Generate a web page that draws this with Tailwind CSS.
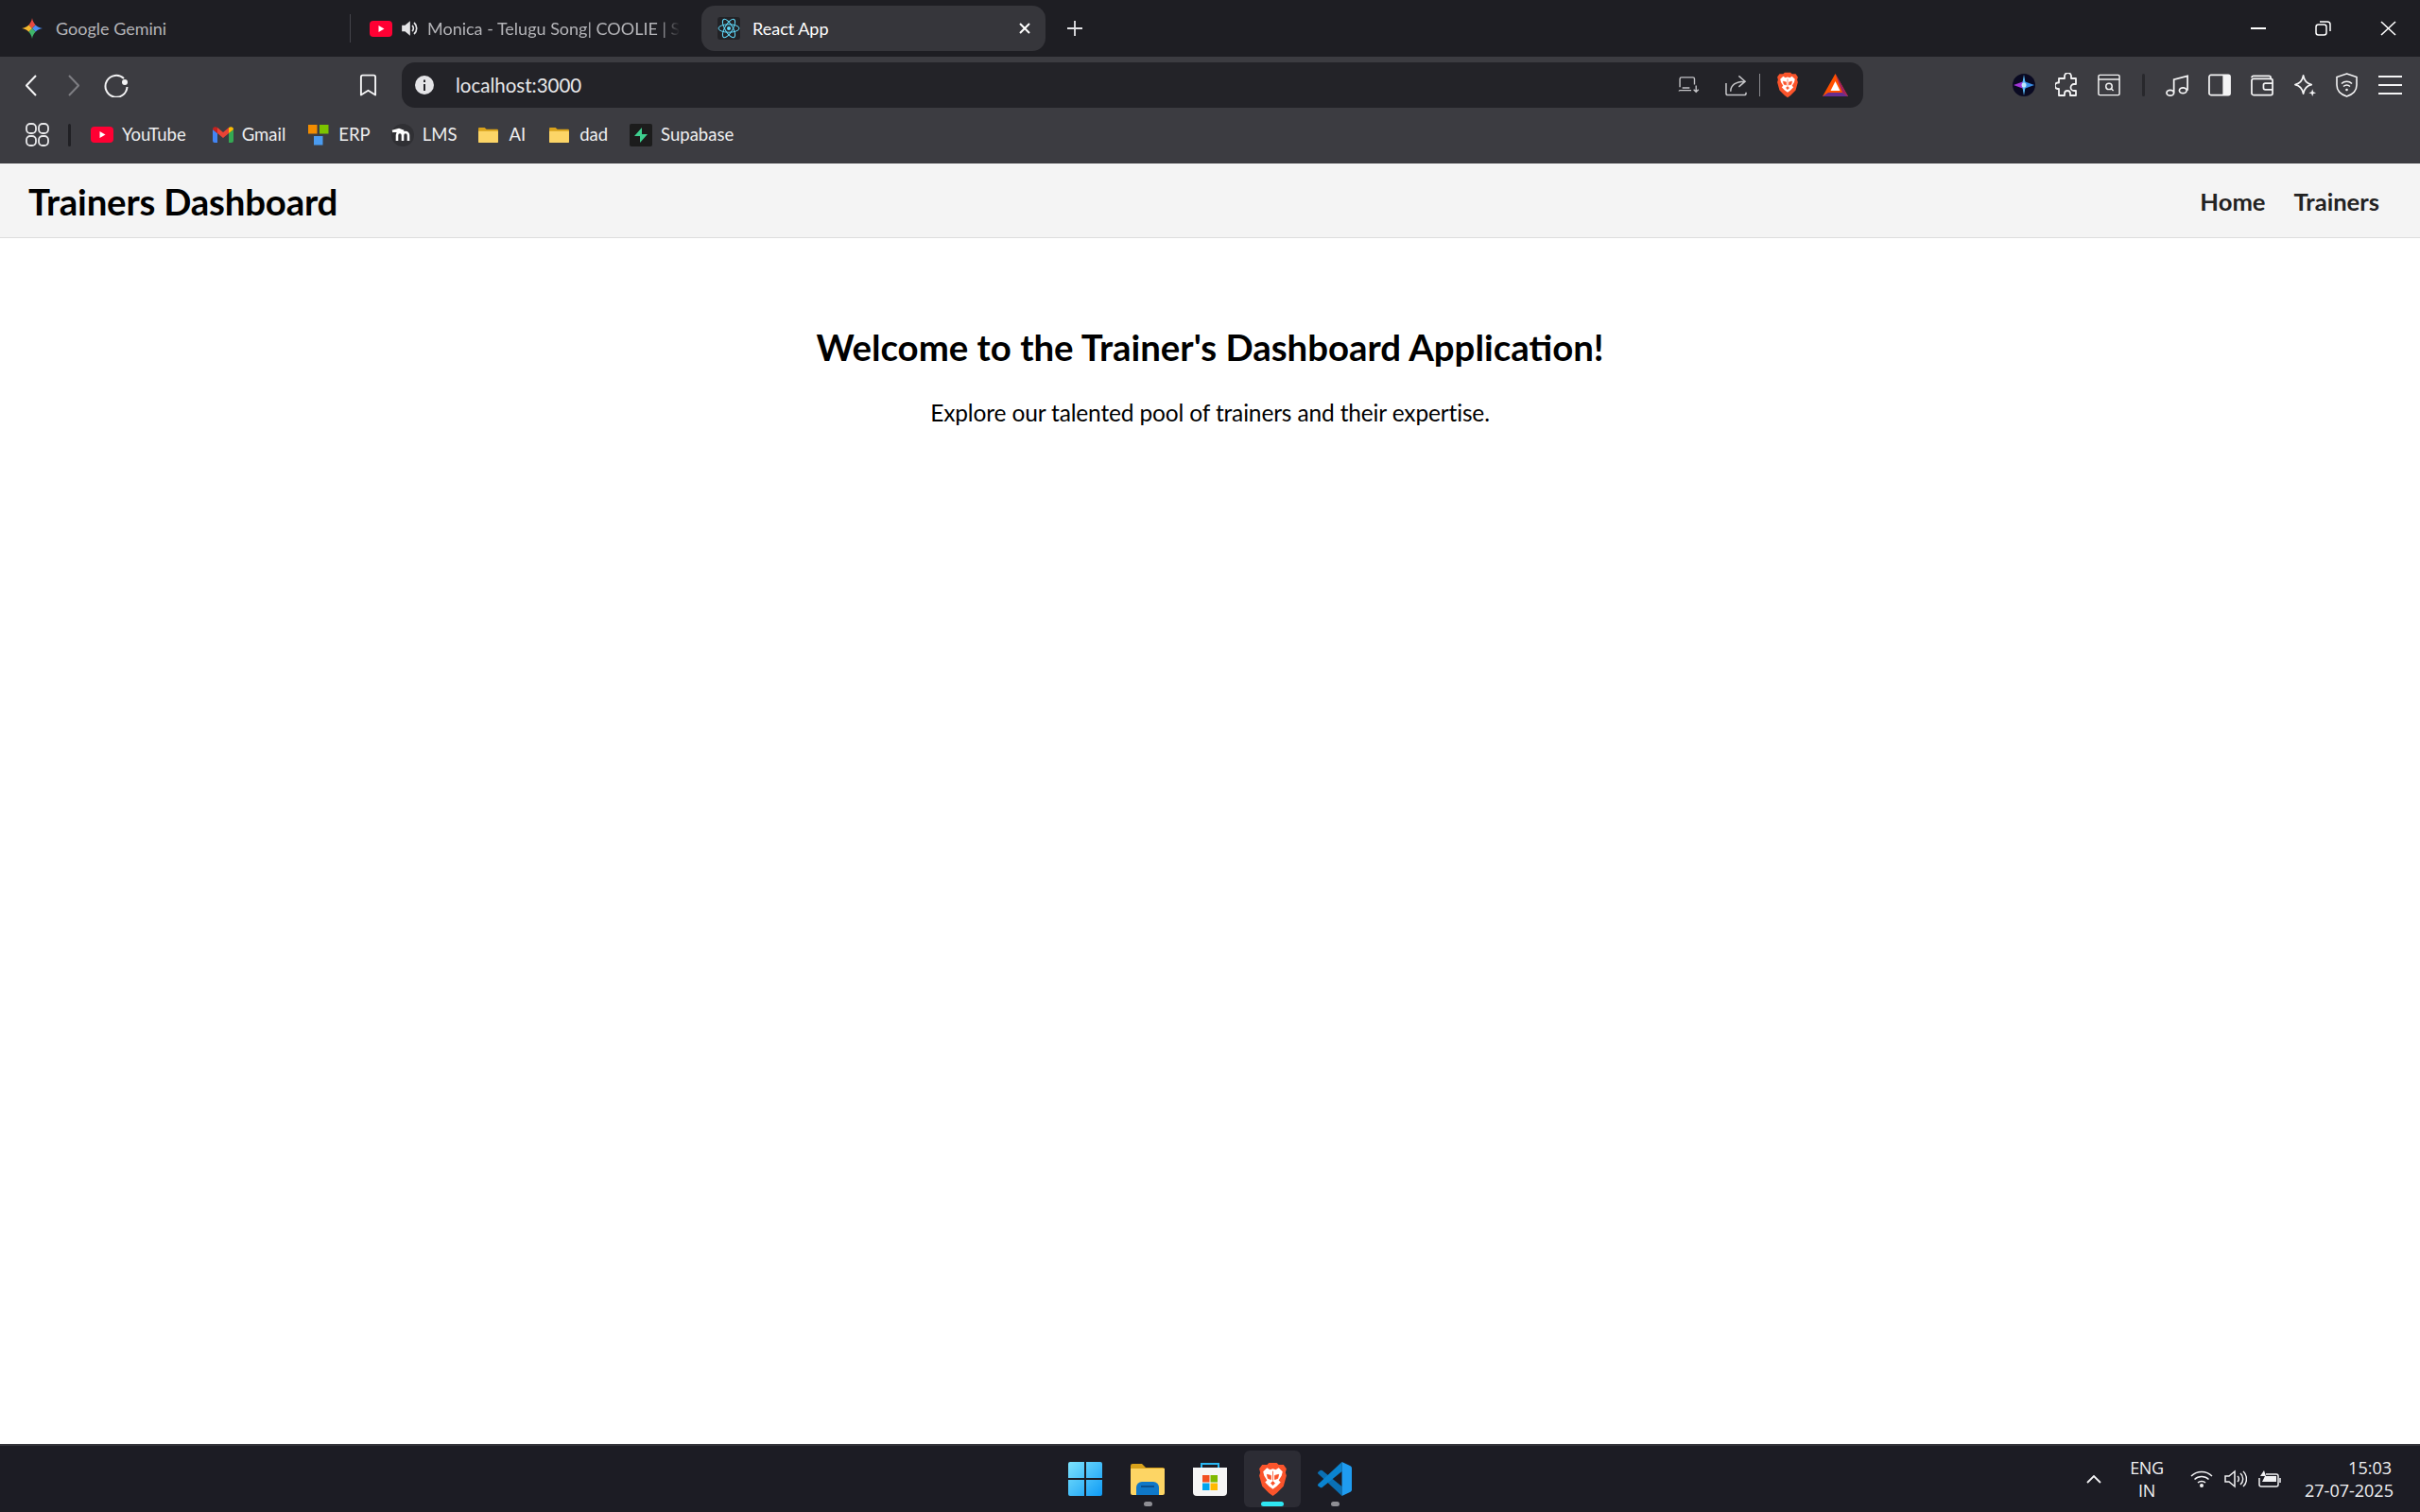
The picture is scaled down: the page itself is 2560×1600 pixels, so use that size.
<!DOCTYPE html>
<html lang="en">
<head>
<meta charset="UTF-8">
<title>React App</title>
<script src="https://cdn.jsdelivr.net/npm/@tailwindcss/browser@4"></script>
</head>
<body class="h-[1600px] w-[2560px] overflow-hidden bg-white font-['Lato',sans-serif] flex flex-col">
<svg class="hidden">
  <defs>
    <symbol id="brave" viewBox="0 0 30 36">
      <path d="M4 3 9 3 11 1 19 1 21 3 26 3 29 7 28 11 29 14 26 25 19 32 15 35 11 32 4 25 1 14 2 11 1 7Z" fill="#fb542b"/>
      <path d="M5 10 9 6 12 8 15 7 18 8 21 6 25 10 24 14 21 19 23 21 19 25 15 28 11 25 7 21 9 19 6 14Z" fill="#fff"/>
      <path d="M9 13 13 14 13 18 10 17ZM21 13 17 14 17 18 20 17ZM15 9.500V19M13 22 15 20 17 22 15 24Z" fill="#fb542b" stroke="#fb542b" stroke-width=".8"/>
    </symbol>
    <symbol id="folder" viewBox="0 0 24 20">
      <path d="M1 3a1 1 0 0 1 1-1h6l2 2h12a1 1 0 0 1 1 1v13a1 1 0 0 1-1 1H2a1 1 0 0 1-1-1Z" fill="#d9a21b"/>
      <path d="M1 6h22v12a1 1 0 0 1-1 1H2a1 1 0 0 1-1-1Z" fill="#fcd567"/>
    </symbol>
  </defs>
</svg>

<!-- tab strip -->
<div class="h-[60px] shrink-0 bg-[#1e1e23] flex items-center text-[18px]">
  <div class="w-[371px] h-[48px] flex items-center pl-[22px] gap-[13px] text-[#b4b4b8] border-r border-[#44444a] [border-image:linear-gradient(transparent_20%,#44444a_20%,#44444a_80%,transparent_80%)_1]">
    <svg class="w-[24px] h-[24px]" viewBox="0 0 24 24">
      <defs><clipPath id="star"><path d="M12 1C13 7 17 11 23 12 17 13 13 17 12 23 11 17 7 13 1 12 7 11 11 7 12 1Z"/></clipPath></defs>
      <g clip-path="url(#star)">
        <path d="M0 0h24L12 12Z" fill="#e8493f"/>
        <path d="M24 0v24L12 12Z" fill="#4d8df0"/>
        <path d="M0 24h24L12 12Z" fill="#3fb56a"/>
        <path d="M0 0v24l12-12Z" fill="#f5b82e"/>
      </g>
    </svg>
    <span>Google Gemini</span>
  </div>
  <div class="w-[371px] h-[48px] flex items-center pl-[20px] text-[#b4b4b8]">
    <svg class="w-[24px] h-[17px] mr-[10px] shrink-0" viewBox="0 0 24 17"><rect width="24" height="17" rx="4" fill="#ff0033"/><path d="M9.500 5v7l6-3.500Z" fill="#fff"/></svg>
    <svg class="w-[18px] h-[18px] mr-[9px] shrink-0" viewBox="0 0 18 18" fill="none" stroke="#e4e4e7" stroke-width="1.700"><path d="M1 6.500h3L8 3v12l-4-3.500H1Z" fill="#e4e4e7"/><path d="M11 6a4 4 0 0 1 0 6M13 3a8 8 0 0 1 0 12"/></svg>
    <span class="whitespace-nowrap [mask-image:linear-gradient(90deg,#000_92%,transparent)]">Monica - Telugu Song| COOLIE | S</span>
  </div>
  <div class="w-[364px] h-[48px] rounded-[14px] bg-[#36363b] flex items-center pl-[17px] pr-[15px] text-white">
    <svg class="w-[24px] h-[24px] mr-[13px] bg-[#222226] rounded-[3px] shrink-0" viewBox="0 0 24 24" fill="none" stroke="#61dafb" stroke-width="1"><circle cx="12" cy="12" r="2" fill="#61dafb" stroke="none"/><ellipse cx="12" cy="12" rx="11" ry="4.200"/><ellipse cx="12" cy="12" rx="11" ry="4.200" transform="rotate(60 12 12)"/><ellipse cx="12" cy="12" rx="11" ry="4.200" transform="rotate(120 12 12)"/></svg>
    <span class="flex-1">React App</span>
    <svg class="w-[14px] h-[14px]" viewBox="0 0 14 14" stroke="#fff" stroke-width="2"><path d="M2 2l10 10M12 2 2 12"/></svg>
  </div>
  <svg class="w-[16px] h-[16px] ml-[23px]" viewBox="0 0 16 16" stroke="#e4e4e7" stroke-width="1.800"><path d="M8 0v16M0 8h16"/></svg>
  <div class="ml-auto flex items-center h-full">
    <svg class="w-[16px] h-[16px] mr-[52px]" viewBox="0 0 16 16" stroke="#fff" stroke-width="2"><path d="M0 8h16"/></svg>
    <svg class="w-[17px] h-[16px] mr-[52px]" viewBox="0 0 17 16" fill="none" stroke="#fff" stroke-width="1.500"><rect x="1" y="4" width="11" height="11" rx="2.500"/><path d="M5 1h8a3 3 0 0 1 3 3v7"/></svg>
    <svg class="w-[17px] h-[16px] mr-[25px]" viewBox="0 0 17 16" stroke="#fff" stroke-width="1.600"><path d="M1 1l15 14M16 1 1 15"/></svg>
  </div>
</div>

<!-- toolbar -->
<div class="h-[60px] shrink-0 bg-[#3c3c41] flex items-center">
  <div class="w-[425px] h-full flex items-center pl-[27px]">
    <svg class="w-[12px] h-[23px] mr-[33px]" viewBox="0 0 12 23" fill="none" stroke="#f4f4f5" stroke-width="2"><path d="M11 1 1 11.500 11 22"/></svg>
    <svg class="w-[12px] h-[23px] mr-[26px]" viewBox="0 0 12 23" fill="none" stroke="#7d7d82" stroke-width="2"><path d="M1 1l10 10.500L1 22"/></svg>
    <svg class="w-[26px] h-[26px]" viewBox="0 0 26 26" fill="none" stroke="#f4f4f5" stroke-width="2"><path d="M21 6A11.500 11.500 0 1 0 24.500 15"/><circle cx="22" cy="10" r="3" fill="#f4f4f5" stroke="none"/></svg>
    <svg class="w-[19px] h-[25px] ml-auto mr-[26px]" viewBox="0 0 20 25" fill="none" stroke="#f4f4f5" stroke-width="2"><path d="M2 3a2 2 0 0 1 2-2h12a2 2 0 0 1 2 2v20l-8-5-8 5Z" stroke-linejoin="round"/></svg>
  </div>
  <div class="w-[1546px] h-[48px] rounded-[14px] bg-[#232328] flex items-center pl-[14px] pr-[16px]">
    <svg class="w-[20px] h-[20px] mr-[23px]" viewBox="0 0 20 20"><circle cx="10" cy="10" r="10" fill="#e4e4e7"/><rect x="9" y="9" width="2" height="7" fill="#232328"/><rect x="9" y="4.500" width="2" height="2.500" fill="#232328"/></svg>
    <span class="text-[#e8e8ea] text-[20.500px]">localhost:3000</span>
    <div class="ml-auto flex items-center">
      <svg class="w-[25px] h-[18px] mr-[26px]" viewBox="0 0 26 21" fill="none" stroke="#c4c4c7" stroke-width="1.600"><path d="M20 10V3a2 2 0 0 0-2-2H4a2 2 0 0 0-2 2v10"/><path d="M1 18a1 1 0 0 1 1-1h14M5 14h9M22 11v8M19 16l3 3 3-3"/></svg>
      <svg class="w-[23px] h-[23px] mr-[13px]" viewBox="0 0 24 23" fill="none" stroke="#c4c4c7" stroke-width="1.600"><path d="M1 9v11a2 2 0 0 0 2 2h18a2 2 0 0 0 2-2v-1"/><path d="M6 18c0-7 6-11 15-11M15 1l7 6-7 6"/></svg>
      <div class="w-px h-[24px] bg-[#8a8a8e] mr-[17px]"></div>
      <svg class="w-[24px] h-[28px] mr-[25px]"><use href="#brave"/></svg>
      <svg class="w-[27px] h-[24px]" viewBox="0 0 27 24"><path d="M13.500 0 27 24H0Z" fill="#ff5000"/><path d="M13.500 0 27 24l-6-4Z" fill="#9e1f63"/><path d="M0 24h27l-6-4H6Z" fill="#662d91"/><path d="M13.500 8l5 10h-10Z" fill="#fff"/></svg>
    </div>
  </div>
  <div class="flex-1 h-full flex items-center pl-[158px]">
    <svg class="w-[24px] h-[24px] mr-[21px]" viewBox="0 0 24 24"><circle cx="12" cy="12" r="12" fill="#0a0a22"/><path d="M12 8 1 12l11 4Z" fill="#a235d8"/><path d="M12 8l11 4-11 4Z" fill="#3a8fe8"/><path d="M12 1l2 11-2 11-2-11Z" fill="#58b8f5"/><circle cx="12" cy="12" r="2.500" fill="#bfe6fc"/></svg>
    <svg class="w-[26px] h-[26px] mr-[19px]" viewBox="0 0 26 26" fill="none" stroke="#f4f4f5" stroke-width="1.800" stroke-linejoin="round"><path d="M10 3.500a3.500 3.500 0 0 1 7 0V6h5v6h-2a3.500 3.500 0 0 0 0 7h2v5h-6v-2a3 3 0 0 0-6 0v2H4v-7H2.500a3.300 3.300 0 0 1 0-6.500H4V6h6Z"/></svg>
    <svg class="w-[24px] h-[24px] mr-[23px]" viewBox="0 0 26 25" fill="none" stroke="#f4f4f5" stroke-width="1.600"><rect x="1" y="1" width="24" height="23" rx="1.500"/><path d="M1 6h24"/><circle cx="13" cy="14" r="3.500"/><path d="M15.500 16.500 18 19"/></svg>
    <div class="w-[3px] h-[24px] rounded bg-[#28282c] mr-[22px]"></div>
    <svg class="w-[25px] h-[25px] mr-[20px]" viewBox="0 0 26 25" fill="none" stroke="#f4f4f5" stroke-width="1.800"><ellipse cx="5" cy="20.500" rx="4" ry="3"/><ellipse cx="19" cy="18" rx="4" ry="3"/><path d="M9 20V6L24 2v16"/></svg>
    <svg class="w-[24px] h-[24px] mr-[21px]" viewBox="0 0 25 24"><rect x="1" y="1" width="23" height="22" rx="2" fill="none" stroke="#f4f4f5" stroke-width="1.800"/><rect x="16" y="1" width="8" height="22" fill="#f4f4f5"/></svg>
    <svg class="w-[24px] h-[24px] mr-[21px]" viewBox="0 0 25 24" fill="none" stroke="#f4f4f5" stroke-width="1.800"><path d="M1 4a2 2 0 0 1 2-2h17a2 2 0 0 1 2 2v2"/><rect x="1" y="5" width="23" height="18" rx="2"/><path d="M24 10h-8a2 2 0 0 0-2 2v3a2 2 0 0 0 2 2h8"/></svg>
    <svg class="w-[25px] h-[25px] mr-[20px]" viewBox="0 0 26 26" fill="none" stroke="#f4f4f5" stroke-width="1.800"><path d="M11 2c1 6 4 9 9 10-5 1-8 4-9 10-1-6-4-9-9-10 5-1 8-4 9-10Z" stroke-linejoin="round"/><path d="M21 17l1 3 3 1-3 1-1 3-1-3-3-1 3-1Z" fill="#f4f4f5" stroke="none"/></svg>
    <svg class="w-[23px] h-[26px] mr-[22px]" viewBox="0 0 23 26" fill="none" stroke="#f4f4f5" stroke-width="1.600"><path d="M11.500 1 22 4.500V13c0 6-4.500 10-10.500 12C5.500 23 1 19 1 13V4.500Z"/><path d="M6 11.500c3-3 8-3 11 0M8 14.500c2-1.700 5-1.700 7 0"/><circle cx="11.500" cy="18" r="1.300" fill="#f4f4f5" stroke="none"/></svg>
    <svg class="w-[25px] h-[20px]" viewBox="0 0 25 20" stroke="#f4f4f5" stroke-width="2"><path d="M0 1h25M0 10h25M0 19h25"/></svg>
  </div>
</div>

<!-- bookmarks -->
<div class="h-[53px] shrink-0 bg-[#3c3c41] flex items-center pl-[27px] pb-[8px] text-[18.500px] text-[#eeeeef]">
  <svg class="w-[25px] h-[25px] mr-[20px]" viewBox="0 0 25 25" fill="none" stroke="#e8e8ea" stroke-width="1.800"><rect x="1" y="1" width="10" height="10" rx="4"/><rect x="14" y="1" width="10" height="10" rx="4"/><rect x="1" y="14" width="10" height="10" rx="4"/><rect x="14" y="14" width="10" height="10" rx="4"/></svg>
  <div class="w-[3px] h-[24px] rounded bg-[#202024] mr-[21px]"></div>
  <div class="flex items-center gap-[9px] mr-[28px]">
    <svg class="w-[24px] h-[17px]" viewBox="0 0 24 17"><rect width="24" height="17" rx="4" fill="#ff0033"/><path d="M9.500 5v7l6-3.500Z" fill="#fff"/></svg>
    <span>YouTube</span>
  </div>
  <div class="flex items-center gap-[9px] mr-[24px]">
    <svg class="w-[22px] h-[17px]" viewBox="0 0 22 17"><path d="M0 3v12a2 2 0 0 0 2 2h3V7Z" fill="#4285f4"/><path d="M17 7v10h3a2 2 0 0 0 2-2V3Z" fill="#34a853"/><path d="M5 7l6 5 6-5V1l-6 5-6-5Z" fill="#ea4335"/><path d="M0 3c0-3 3-3.500 5-2v6Z" fill="#c5221f"/><path d="M22 3c0-3-3-3.500-5-2v6Z" fill="#fbbc04"/></svg>
    <span>Gmail</span>
  </div>
  <div class="flex items-center gap-[10px] mr-[22px]">
    <svg class="w-[22px] h-[22px]" viewBox="0 0 22 22"><rect width="9.500" height="9.500" fill="#f28c00"/><rect x="12" width="9.500" height="9.500" fill="#7cc400"/><rect x="6" y="12" width="9.500" height="9.500" fill="#4a9bf0"/></svg>
    <span>ERP</span>
  </div>
  <div class="flex items-center gap-[9px] mr-[22px]">
    <svg class="w-[24px] h-[24px]" viewBox="0 0 24 24"><circle cx="12" cy="12" r="12" fill="#303034"/><path d="M1 8l7-2 5 2H5M6 18v-6a3 3 0 0 1 6 0v6M12 12a3 3 0 0 1 6 0v6" fill="none" stroke="#fff" stroke-width="2.600"/></svg>
    <span>LMS</span>
  </div>
  <div class="flex items-center gap-[10px] mr-[24px]">
    <svg class="w-[23px] h-[19px]"><use href="#folder"/></svg>
    <span>AI</span>
  </div>
  <div class="flex items-center gap-[10px] mr-[23px]">
    <svg class="w-[23px] h-[19px]"><use href="#folder"/></svg>
    <span>dad</span>
  </div>
  <div class="flex items-center gap-[9px]">
    <svg class="w-[24px] h-[24px] bg-[#1c1c1c] rounded-[2px]" viewBox="0 0 24 24"><path d="M13 4v7h6l-8 9v-7H5Z" fill="#3ecf8e"/></svg>
    <span>Supabase</span>
  </div>
</div>

<!-- page -->
<nav class="h-[79px] shrink-0 bg-[#f4f4f4] border-b border-[#dddddd] flex items-center justify-between pl-[30px] pr-[43px] pt-[3px]">
  <h1 class="text-[38.400px] font-bold text-black tracking-[-0.2px]">Trainers Dashboard</h1>
  <ul class="flex items-center gap-[30px] text-[25.600px] font-bold text-[#222222]">
    <li>Home</li>
    <li>Trainers</li>
  </ul>
</nav>
<main class="flex-1 flex flex-col items-center pt-[90px] text-black">
  <h2 class="text-[38.400px] font-bold leading-[50px]">Welcome to the Trainer's Dashboard Application!</h2>
  <p class="mt-[28px] text-[24.500px] leading-[34px] tracking-[-0.15px]">Explore our talented pool of trainers and their expertise.</p>
</main>

<!-- taskbar -->
<footer class="h-[72px] shrink-0 bg-[#1c1c24] border-t-2 border-[#34343a] grid grid-cols-[1fr_auto_1fr] items-center text-[#f2f2f4] text-[18px] leading-[24px]">
  <div></div>
  <div class="flex items-center h-full">
    <div class="w-[66px] flex justify-center">
      <svg class="w-[36px] h-[36px]" viewBox="0 0 36 36"><defs><linearGradient id="win" x1="0" y1="0" x2="1" y2="1"><stop offset="0" stop-color="#7de3fd"/><stop offset="1" stop-color="#0f9bf5"/></linearGradient></defs><path d="M2 0h15v17H0V2a2 2 0 0 1 2-2ZM19 0h15a2 2 0 0 1 2 2v15H19ZM0 19h17v17H2a2 2 0 0 1-2-2ZM19 19h17v15a2 2 0 0 1-2 2H19Z" fill="url(#win)"/></svg>
    </div>
    <div class="w-[66px] flex flex-col items-center relative">
      <svg class="w-[36px] h-[33px]" viewBox="0 0 36 33"><path d="M0 2a2 2 0 0 1 2-2h10l4 4h18a2 2 0 0 1 2 2v6H0Z" fill="#d9a21b"/><path d="M0 5h36v26a2 2 0 0 1-2 2H2a2 2 0 0 1-2-2Z" fill="#fdd564"/><path d="M6 33v-8a6 6 0 0 1 6-6h12a6 6 0 0 1 6 6v8Z" fill="#0f78c8"/><rect x="11" y="23" width="14" height="2" fill="#0a4f8c"/></svg>
      <div class="absolute -bottom-[12px] w-[9px] h-[5px] rounded-full bg-[#8e8e94]"></div>
    </div>
    <div class="w-[66px] flex justify-center">
      <svg class="w-[36px] h-[35px]" viewBox="0 0 36 35"><path d="M9 6V1h18v5" fill="none" stroke="#29b6f2" stroke-width="2"/><path d="M0 5h36v26a4 4 0 0 1-4 4H4a4 4 0 0 1-4-4Z" fill="#f6f6f6"/><rect x="10" y="13" width="7.500" height="7.500" fill="#f25022"/><rect x="18.500" y="13" width="7.500" height="7.500" fill="#7fba00"/><rect x="10" y="21.500" width="7.500" height="7.500" fill="#00a4ef"/><rect x="18.500" y="21.500" width="7.500" height="7.500" fill="#ffb900"/></svg>
    </div>
    <div class="w-[66px] flex justify-center">
      <div class="w-[60px] h-[60px] rounded-[6px] bg-[#2c2c34] flex items-center justify-center relative">
        <svg class="w-[31px] h-[37px]"><use href="#brave"/></svg>
        <div class="absolute bottom-[1px] w-[24px] h-[5px] rounded-full bg-[#2ee6f2]"></div>
      </div>
    </div>
    <div class="w-[66px] flex justify-center relative">
      <svg class="w-[36px] h-[36px]" viewBox="0 0 100 100"><path d="M71 100V72L13 25Q10 23 7 25L1 30Q-1 33 1 35Z" fill="#0a70b4"/><path d="M71 0V28L13 75Q10 77 7 75L1 70Q-1 67 1 65Z" fill="#0a84d0"/><path d="M71 0 96 12Q100 14 100 18V82Q100 86 96 88L71 100Z" fill="#1f9cf0"/></svg>
      <div class="absolute -bottom-[11px] w-[9px] h-[5px] rounded-full bg-[#8e8e94]"></div>
    </div>
  </div>
  <div class="flex items-center justify-end pr-[30px] h-full font-['Open_Sans',sans-serif]">
    <svg class="w-[16px] h-[9px] mr-[28px]" viewBox="0 0 16 9" fill="none" stroke="#f2f2f4" stroke-width="1.800"><path d="M1 8l7-7 7 7"/></svg>
    <div class="w-[40px] text-center mr-[26px] tracking-[-0.3px]"><div>ENG</div><div>IN</div></div>
    <svg class="w-[24px] h-[18px] mr-[12px]" viewBox="0 0 24 18" fill="none" stroke="#f2f2f4" stroke-width="1.500"><path d="M1 6c6-6 16-6 22 0M4.500 9.500c4-4 11-4 15 0M8 13c2-2 6-2 8 0"/><circle cx="12" cy="16" r="2" fill="#f2f2f4" stroke="none"/></svg>
    <svg class="w-[24px] h-[20px] mr-[12px]" viewBox="0 0 24 20" fill="none" stroke="#f2f2f4" stroke-width="1.500"><path d="M1 7h4l6-5v16l-6-5H1Z"/><path d="M14 7a4 4 0 0 1 0 6M17 4a8 8 0 0 1 0 12M20 2a11 11 0 0 1 0 16"/></svg>
    <svg class="w-[24px] h-[20px] mr-[25px]" viewBox="0 0 24 20" fill="none" stroke="#f2f2f4" stroke-width="1.500"><path d="M8 5h11a2 2 0 0 1 2 2v9a2 2 0 0 1-2 2H3a2 2 0 0 1-2-2V9"/><path d="M23 9v5"/><path d="M6 1 2 7h5l-3 6h15V7H8Z" fill="#f2f2f4" stroke="none"/></svg>
    <div class="w-[92px] text-right whitespace-nowrap"><div>15:03</div><div>27-07-2025</div></div>
  </div>
</footer>
</body>
</html>
